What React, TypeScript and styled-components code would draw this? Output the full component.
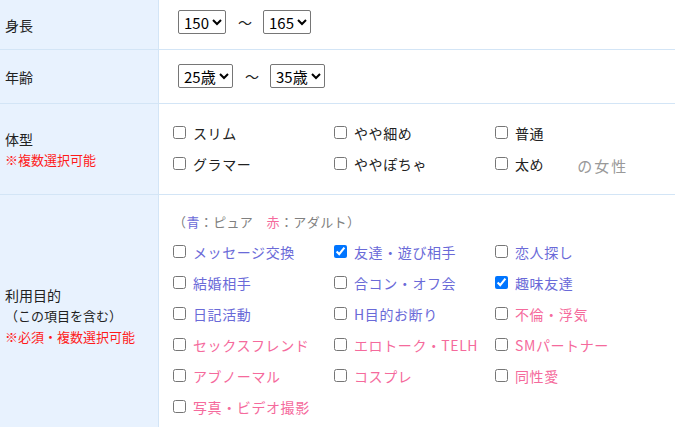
import React from 'react';
import styled, { createGlobalStyle } from 'styled-components';

const GlobalStyle = createGlobalStyle`
  html, body {
    margin: 0;
    padding: 0;
    background: #fff;
  }
  body {
    font-family: 'Noto Sans CJK JP', 'Noto Sans', sans-serif;
    color: #222;
    overflow: hidden;
  }
`;

const Table = styled.div`
  width: 675px;
  display: flex;
  flex-direction: column;
`;

const Row = styled.div`
  display: grid;
  grid-template-columns: 159px 1fr;
  border-bottom: 1px solid #d3e5f6;
`;

const Head = styled.div`
  background: #e8f2fe;
  border-right: 1px solid #d3e5f6;
  padding-left: 5px;
  display: flex;
  flex-direction: column;
  justify-content: center;
  font-size: 14px;
  line-height: 20px;
`;

const Note = styled.div<{ $color?: string }>`
  font-size: 13px;
  line-height: 21px;
  color: ${({ $color }) => $color || '#222'};
`;

const Cell = styled.div<{ $pad: string }>`
  padding: ${({ $pad }) => $pad};
`;

const RangeLine = styled.div`
  display: flex;
  align-items: center;
  height: 24px;
`;

const Select = styled.select`
  font-family: 'Noto Sans CJK JP', sans-serif;
  font-size: 15px;
  height: 24px;
  color: #000;
  border: 1px solid #767676;
  border-radius: 2px;
  background: #fff;
  padding: 0 0 0 1px;
  margin: 0;
`;

const Tilde = styled.span`
  font-size: 14px;
  margin: 0 11px 0 12px;
  color: #222;
`;

const Legend = styled.div`
  font-size: 13px;
  line-height: 18px;
  letter-spacing: 0.4px;
  color: #808080;
  margin-bottom: 5px;
`;

const Tint = styled.span<{ $color: string }>`
  color: ${({ $color }) => $color};
`;

const Options = styled.div`
  display: grid;
  grid-template-columns: repeat(3, 161px);
  grid-auto-rows: 31px;
`;

const Option = styled.label<{ $color?: string }>`
  display: flex;
  align-items: center;
  font-size: 14px;
  letter-spacing: 0.6px;
  color: ${({ $color }) => $color || '#222'};
  white-space: nowrap;

  input {
    width: 13px;
    height: 13px;
    margin: 0 7px 0 0;
  }
`;

const Suffix = styled.span`
  margin-left: 33px;
  margin-top: 4px;
  font-size: 15px;
  letter-spacing: 2px;
  color: #999;
`;

const BLUE = '#6a6ad8';
const PINK = '#f56a9c';

type Item = { label: string; color?: string; checked?: boolean };

const bodyTypes: Item[] = [
  { label: 'スリム' },
  { label: 'やや細め' },
  { label: '普通' },
  { label: 'グラマー' },
  { label: 'ややぽちゃ' },
  { label: '太め' },
];

const purposes: Item[] = [
  { label: 'メッセージ交換', color: BLUE },
  { label: '友達・遊び相手', color: BLUE, checked: true },
  { label: '恋人探し', color: BLUE },
  { label: '結婚相手', color: BLUE },
  { label: '合コン・オフ会', color: BLUE },
  { label: '趣味友達', color: BLUE, checked: true },
  { label: '日記活動', color: BLUE },
  { label: 'H目的お断り', color: BLUE },
  { label: '不倫・浮気', color: PINK },
  { label: 'セックスフレンド', color: PINK },
  { label: 'エロトーク・TELH', color: PINK },
  { label: 'SMパートナー', color: PINK },
  { label: 'アブノーマル', color: PINK },
  { label: 'コスプレ', color: PINK },
  { label: '同性愛', color: PINK },
  { label: '写真・ビデオ撮影', color: PINK },
];

const Check: React.FC<{ item: Item; children?: React.ReactNode }> = ({ item, children }) => (
  <Option $color={item.color}>
    <input type="checkbox" defaultChecked={item.checked} />
    {item.label}
    {children}
  </Option>
);

const App: React.FC = () => (
  <>
    <GlobalStyle />
    <Table>
      <Row>
        <Head>身長</Head>
        <Cell $pad="10px 0 15px 19px">
          <RangeLine>
            <Select defaultValue="150">
              <option>150</option>
            </Select>
            <Tilde>〜</Tilde>
            <Select defaultValue="165">
              <option>165</option>
            </Select>
          </RangeLine>
        </Cell>
      </Row>
      <Row>
        <Head>年齢</Head>
        <Cell $pad="14px 0 15px 19px">
          <RangeLine>
            <Select defaultValue="25歳">
              <option>25歳</option>
            </Select>
            <Tilde>〜</Tilde>
            <Select defaultValue="35歳">
              <option>35歳</option>
            </Select>
          </RangeLine>
        </Cell>
      </Row>
      <Row>
        <Head>
          <div>体型</div>
          <Note $color="#ff1a1a">※複数選択可能</Note>
        </Head>
        <Cell $pad="13px 0 15px 14px">
          <Options>
            {bodyTypes.map((item, i) => (
              <Check key={item.label} item={item}>
                {i === bodyTypes.length - 1 && <Suffix>の女性</Suffix>}
              </Check>
            ))}
          </Options>
        </Cell>
      </Row>
      <Row>
        <Head>
          <div>利用目的</div>
          <Note>（この項目を含む）</Note>
          <Note $color="#ff1a1a">※必須・複数選択可能</Note>
        </Head>
        <Cell $pad="18px 0 14px 14px">
          <Legend>
            （<Tint $color={BLUE}>青</Tint>：ピュア　<Tint $color={PINK}>赤</Tint>：アダルト）
          </Legend>
          <Options>
            {purposes.map((item) => (
              <Check key={item.label} item={item} />
            ))}
          </Options>
        </Cell>
      </Row>
    </Table>
  </>
);

export default App;
